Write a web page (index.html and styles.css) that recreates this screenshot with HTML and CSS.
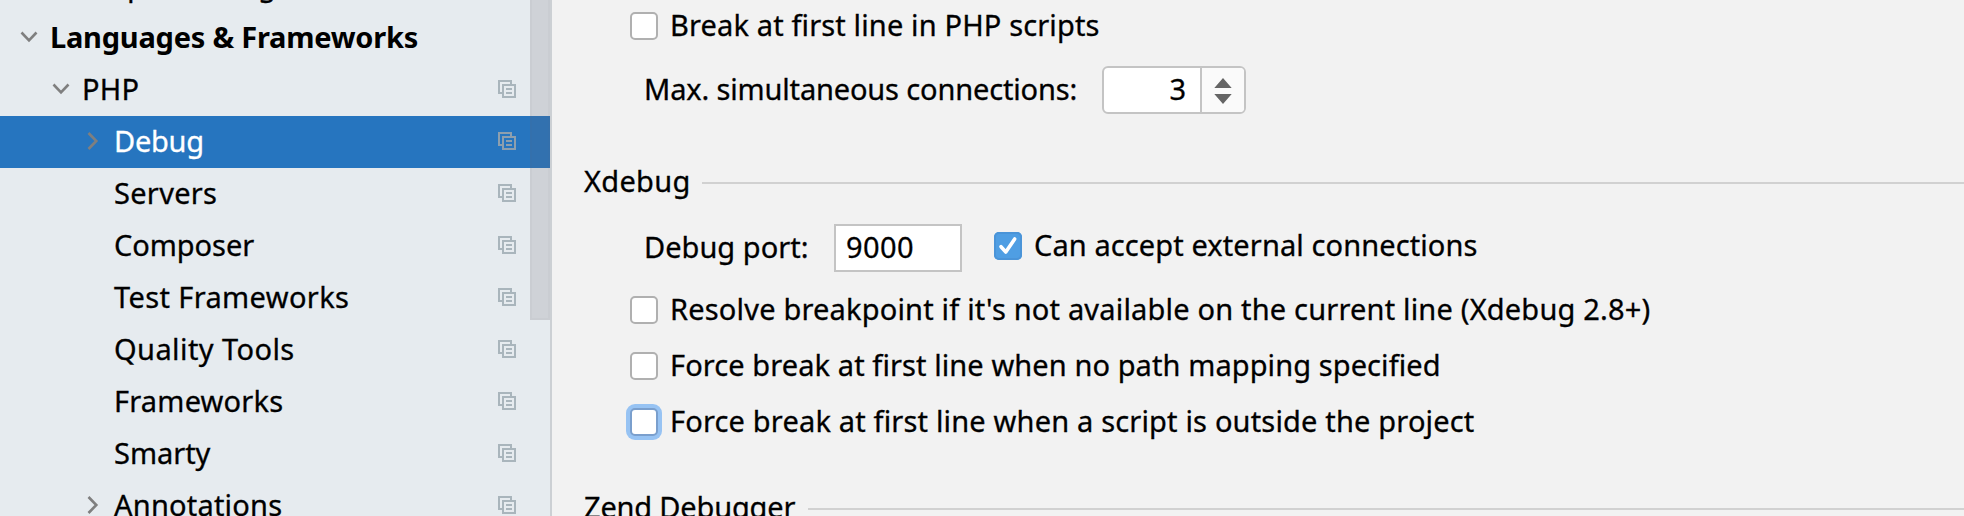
FILE: index.html
```html
<!DOCTYPE html>
<html lang="en">
<head>
<meta charset="utf-8">
<title>Settings</title>
<link rel="stylesheet" href="styles.css">
</head>
<body>
<svg class="defs" width="0" height="0">
  <symbol id="copy" viewBox="0 0 18 18"><path d="M13 4V1H1V13H4M5 5H17V17H5ZM8 9H14M8 13H14" fill="none" stroke="currentColor" stroke-width="2"/></symbol>
  <symbol id="down" viewBox="0 0 18 12"><path d="M1.5 1.5L9 9.3L16.5 1.5" fill="none" stroke="currentColor" stroke-width="2.6"/></symbol>
  <symbol id="right" viewBox="0 0 12 18"><path d="M1.5 1L9.3 9L1.5 17" fill="none" stroke="currentColor" stroke-width="2.6"/></symbol>
</svg>
<div class="window">
  <nav class="sidebar">
    <div class="row above"><span class="label lv1 t-plugins">Required Plugins</span></div>
    <div class="row top"><svg class="chev down lv0c"><use href="#down"/></svg><span class="label bold t-lang">Languages &amp; Frameworks</span></div>
    <div class="row"><svg class="chev down lv1c"><use href="#down"/></svg><span class="label t-php">PHP</span><svg class="copy"><use href="#copy"/></svg></div>
    <div class="row selected"><svg class="chev right"><use href="#right"/></svg><span class="label t-debug">Debug</span><svg class="copy"><use href="#copy"/></svg></div>
    <div class="row"><span class="label lv2 t-servers">Servers</span><svg class="copy"><use href="#copy"/></svg></div>
    <div class="row"><span class="label lv2 t-composer">Composer</span><svg class="copy"><use href="#copy"/></svg></div>
    <div class="row"><span class="label lv2 t-test">Test Frameworks</span><svg class="copy"><use href="#copy"/></svg></div>
    <div class="row"><span class="label lv2 t-quality">Quality Tools</span><svg class="copy"><use href="#copy"/></svg></div>
    <div class="row"><span class="label lv2 t-frameworks">Frameworks</span><svg class="copy"><use href="#copy"/></svg></div>
    <div class="row"><span class="label lv2 t-smarty">Smarty</span><svg class="copy"><use href="#copy"/></svg></div>
    <div class="row"><svg class="chev right"><use href="#right"/></svg><span class="label t-annotations">Annotations</span><svg class="copy"><use href="#copy"/></svg></div>
    <div class="thumb"></div>
  </nav>
  <main class="panel">
    <div class="option first"><span class="check"></span><span class="label t-break">Break at first line in PHP scripts</span></div>
    <div class="field connections">
      <span class="label t-max">Max. simultaneous connections:</span>
      <div class="spinner"><span class="value"><span class="label">3</span></span><span class="arrows"><svg width="18" height="26" viewBox="0 0 18 26"><path d="M9 0L17.7 10H.3ZM.3 16H17.7L9 26Z" fill="#656565"/></svg></span></div>
    </div>
    <div class="group xdebug"><span class="label t-xdebug">Xdebug</span><span class="rule"></span></div>
    <div class="field port">
      <span class="label t-port">Debug port:</span>
      <div class="input"><span class="label t-9000">9000</span></div>
      <div class="external"><span class="check on"><svg width="28" height="28" viewBox="0 0 28 28"><path d="M7 14.7L11.8 20L20.7 7" fill="none" stroke="#fff" stroke-width="3.6" stroke-linecap="round" stroke-linejoin="round"/></svg></span><span class="label t-can">Can accept external connections</span></div>
    </div>
    <div class="option resolve"><span class="check"></span><span class="label t-resolve">Resolve breakpoint if it's not available on the current line (Xdebug 2.8+)</span></div>
    <div class="option"><span class="check"></span><span class="label t-force1">Force break at first line when no path mapping specified</span></div>
    <div class="option"><span class="check focus"></span><span class="label t-force2">Force break at first line when a script is outside the project</span></div>
    <div class="group zend"><span class="label t-zend">Zend Debugger</span><span class="rule"></span></div>
  </main>
</div>
</body>
</html>
```
FILE: styles.css
```css
* { box-sizing: border-box; }
body { margin: 0; font: 29px/40px "Noto Sans", sans-serif; color: #000; background: #f2f2f2; overflow: hidden; }
.defs { position: absolute; }
.window { display: flex; width: 1964px; height: 516px; overflow: hidden; }

.label { white-space: nowrap; padding-bottom: 2px; flex: none; -webkit-text-stroke: .3px currentColor; }
.bold { font-weight: 700; -webkit-text-stroke: 0; }

.sidebar { position: relative; flex: none; width: 552px; height: 516px; overflow: hidden; background: #e6ebef; border-right: 2px solid #ccd0d4; }
.row { display: flex; align-items: center; height: 52px; padding-right: 34px; }
.above { margin-top: -40px; }
.selected { background: #2675bf; color: #fff; }
.lv1 { margin-left: 82px; }
.lv2 { margin-left: 114px; }
.chev { flex: none; color: #7f7f7f; }
.down { width: 18px; height: 12px; }
.lv0c { margin: 0 12px 2px 20px; }
.lv1c { margin: 0 12px 2px 52px; }
.right { width: 12px; height: 18px; margin: 0 15px 2px 87px; }
.copy { flex: none; width: 18px; height: 18px; margin: 0 0 2px auto; color: #a9b5bc; }
.selected .copy { color: #8d9fae; }
.thumb { position: absolute; top: -2px; right: 0; width: 20px; height: 322px; background: rgba(105, 100, 105, .18); border: 2px solid rgba(105, 100, 105, .04); }

.panel { flex: 1; height: 516px; overflow: hidden; }
.option { display: flex; align-items: center; height: 56px; padding-left: 78px; gap: 12px; }
.first { height: 52px; }
.resolve { margin-top: 10px; }
.check { flex: none; width: 28px; height: 28px; border: 2px solid #b0b0b0; border-radius: 5px; background: #fff; }
.on { border: 0; background: #4f9ee3; box-shadow: inset 0 0 0 2px #4a94d8; }
.on svg { display: block; }
.focus { border-color: #7a9fcd; box-shadow: 0 0 0 4px #97c3f3; }
.field { display: flex; align-items: center; padding-left: 92px; }
.connections { height: 76px; }
.spinner { display: flex; width: 144px; height: 48px; border: 2px solid #c4c4c4; border-radius: 6px; background: #fff; overflow: hidden; }
.value { width: 98px; display: flex; align-items: center; justify-content: flex-end; padding-right: 14px; border-right: 2px solid #c4c4c4; }
.arrows { flex: 1; display: flex; align-items: center; justify-content: center; background: #fafafa; padding-top: 2px; }
.port { height: 48px; margin-top: 22px; }
.input { display: flex; align-items: center; width: 128px; height: 48px; padding-left: 10px; border: 2px solid #c4c4c4; background: #fff; }
.external { display: flex; align-items: center; gap: 12px; margin: 0 0 4px 32px; }
.group { display: flex; align-items: center; height: 40px; padding-left: 32px; }
.xdebug { margin-top: 34px; }
.zend { margin-top: 38px; }
.rule { flex: 1; height: 2px; margin-top: 2px; background: #d1d1d1; }

.t-plugins { letter-spacing: .2px; }
.t-lang { letter-spacing: -.233px; }
.t-php { letter-spacing: .2px; }
.t-debug { letter-spacing: -.25px; }
.t-servers { letter-spacing: .297px; }
.t-composer { letter-spacing: -.05px; }
.t-test { letter-spacing: .381px; }
.t-quality { letter-spacing: .42px; }
.t-frameworks { letter-spacing: .2px; }
.t-smarty { letter-spacing: -.03px; }
.t-annotations { letter-spacing: .212px; }
.t-break { letter-spacing: .14px; }
.t-max { letter-spacing: -.155px; width: 458px; }
.t-xdebug { letter-spacing: .292px; width: 118px; }
.t-port { letter-spacing: .02px; width: 190px; }
.t-9000 { letter-spacing: .412px; }
.t-can { letter-spacing: .1px; }
.t-resolve { letter-spacing: .185px; }
.t-force1 { letter-spacing: .09px; }
.t-force2 { letter-spacing: .173px; }
.t-zend { letter-spacing: -.179px; width: 224px; }
```
